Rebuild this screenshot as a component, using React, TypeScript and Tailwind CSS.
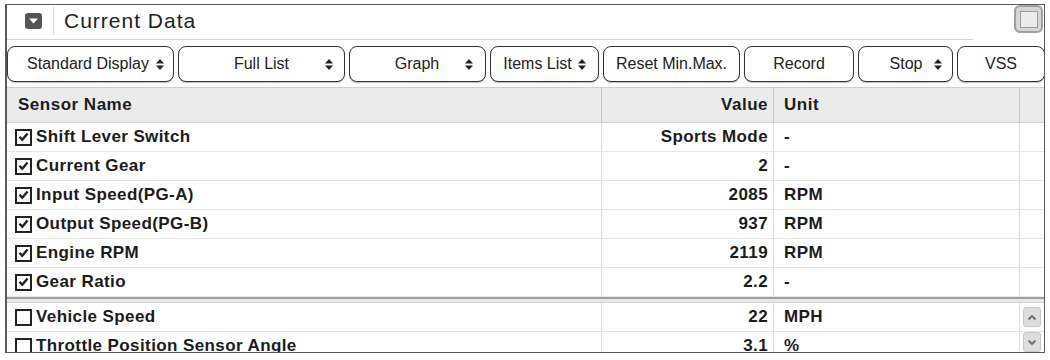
import React from "react";

type Row = { name: string; value: string; unit: string; checked: boolean };

const rows: Row[] = [
  { name: "Shift Lever Switch", value: "Sports Mode", unit: "-", checked: true },
  { name: "Current Gear", value: "2", unit: "-", checked: true },
  { name: "Input Speed(PG-A)", value: "2085", unit: "RPM", checked: true },
  { name: "Output Speed(PG-B)", value: "937", unit: "RPM", checked: true },
  { name: "Engine RPM", value: "2119", unit: "RPM", checked: true },
  { name: "Gear Ratio", value: "2.2", unit: "-", checked: true },
];

const extraRows: Row[] = [
  { name: "Vehicle Speed", value: "22", unit: "MPH", checked: false },
  { name: "Throttle Position Sensor Angle", value: "3.1", unit: "%", checked: false },
];

const buttons = [
  { label: "Standard Display", w: "w-[167px]", arrows: true, pad: "pl-[12px] pr-[9px]" },
  { label: "Full List", w: "w-[167px]", arrows: true, pad: "pl-[19px] pr-[11px]" },
  { label: "Graph", w: "w-[137px]", arrows: true, pad: "pl-[19px] pr-[12px]" },
  { label: "Items List", w: "w-[109px]", arrows: true, pad: "pl-[6px] pr-[12px]" },
  { label: "Reset Min.Max.", w: "w-[137px]", arrows: false, pad: "px-[4px]" },
  { label: "Record", w: "w-[110px]", arrows: false, pad: "px-[4px]" },
  { label: "Stop", w: "w-[95px]", arrows: true, pad: "pl-[19px] pr-[10px]" },
  { label: "VSS", w: "w-[88px]", arrows: false, pad: "px-[4px]" },
];

const UpDown = () => (
  <svg width="8" height="13" viewBox="0 0 8 13" className="shrink-0">
    <polygon points="0,5.5 4,1 8,5.5" fill="#222" />
    <polygon points="0,7.5 8,7.5 4,12" fill="#222" />
  </svg>
);

const CheckBox = ({ checked }: { checked: boolean }) => (
  <div className="w-[17px] h-[17px] border-2 border-[#222] bg-white flex items-center justify-center shrink-0">
    {checked && (
      <svg width="11" height="10" viewBox="0 0 11 10">
        <path d="M1.5 4.8 L4.3 7.8 L9.5 1.5" fill="none" stroke="#222" strokeWidth="2.4" />
      </svg>
    )}
  </div>
);

const GRID = "grid grid-cols-[594px_172px_246px_25px] shrink-0";

const DataRow = ({ row, scroll }: { row: Row; scroll?: "up" | "down" }) => (
  <div className={`${GRID} h-[29px] border-b border-[#e6e6e6] text-[17px] font-bold tracking-[0.4px] text-[#1c1c1c]`}>
    <div className="flex items-center pl-[8px] gap-[4px]">
      <CheckBox checked={row.checked} />
      <span>{row.name}</span>
    </div>
    <div className="flex items-center justify-end pr-[5px] border-l border-[#dedede]">{row.value}</div>
    <div className="flex items-center pl-[10px] border-l border-[#dedede]">{row.unit}</div>
    <div className={`flex justify-center border-l border-[#dedede] ${scroll === "up" ? "items-start pt-[4px]" : "items-start"}`}>
      {scroll && (
        <div className="w-[18px] h-[20px] rounded-[3px] bg-[#dddddd] border border-[#c8c8c8] flex items-center justify-center">
          <svg width="10" height="7" viewBox="0 0 10 7">
            <path
              d={scroll === "up" ? "M1.5 5.5 L5 2 L8.5 5.5" : "M1.5 1.5 L5 5 L8.5 1.5"}
              fill="none"
              stroke="#6a6a6a"
              strokeWidth="1.8"
            />
          </svg>
        </div>
      )}
    </div>
  </div>
);

export default function App() {
  return (
    <div className="w-[1050px] h-[360px] bg-white pl-[5px] pt-[4px] font-['Liberation_Sans',Arial,sans-serif]">
      <div className="w-[1040px] h-[349px] border border-l-2 border-[#5a5a5a] overflow-hidden flex flex-col">
        {/* title */}
        <div className="flex items-start shrink-0">
          <div className="w-[966px] h-[35px] border-b border-[#d4d4d4] flex items-center pb-[3px]">
            <div className="ml-[18px] w-[17px] h-[16px] rounded-[3px] bg-[#555] flex items-center justify-center">
              <svg width="9" height="6" viewBox="0 0 9 6">
                <polygon points="0,0.5 9,0.5 4.5,5.5" fill="#fff" />
              </svg>
            </div>
            <div className="ml-[11px] w-px h-[28px] bg-[#d6d6d6]" />
            <span className="ml-[10px] text-[21px] tracking-[1px] text-[#222]">Current Data</span>
          </div>
          <div className="ml-auto mr-[1px] w-[29px] h-[28px] rounded-[6px] border-2 border-[#a0a0a0] bg-[#d6d6d6] flex items-center justify-center">
            <div className="w-[18px] h-[17px] border border-[#9c9c9c] bg-[#ececec]" />
          </div>
        </div>

        {/* toolbar */}
        <div className="mt-[6px] flex gap-[4px] h-[36px] shrink-0">
          {buttons.map((b) => (
            <div
              key={b.label}
              className={`${b.w} ${b.pad} h-full shrink-0 flex items-center rounded-[8px] border border-[#333] bg-white shadow-[0_1px_1px_rgba(0,0,0,0.25)] text-[16px] text-[#222]`}
            >
              <span className="flex-1 text-center whitespace-nowrap">{b.label}</span>
              {b.arrows && <UpDown />}
            </div>
          ))}
        </div>

        {/* table header */}
        <div className={`${GRID} mt-[5px] h-[36px] border-t border-[#a4a4a4] border-b border-[#d0d0d0] bg-[#ebebeb] text-[17px] font-bold tracking-[0.5px] text-[#1c1c1c]`}>
          <div className="flex items-center pl-[11px]">Sensor Name</div>
          <div className="flex items-center justify-end pr-[5px] border-l border-[#c8c8c8]">Value</div>
          <div className="flex items-center pl-[10px] border-l border-[#c8c8c8]">Unit</div>
          <div className="border-l border-[#c8c8c8]" />
        </div>

        {rows.map((r) => (
          <DataRow key={r.name} row={r} />
        ))}

        <div className="h-[6px] shrink-0 border-t-2 border-[#a0a0a0] bg-[#e8e8e8] border-b border-b-[#cfcfcf]" />

        <DataRow row={extraRows[0]} scroll="up" />
        <DataRow row={extraRows[1]} scroll="down" />
      </div>
    </div>
  );
}
